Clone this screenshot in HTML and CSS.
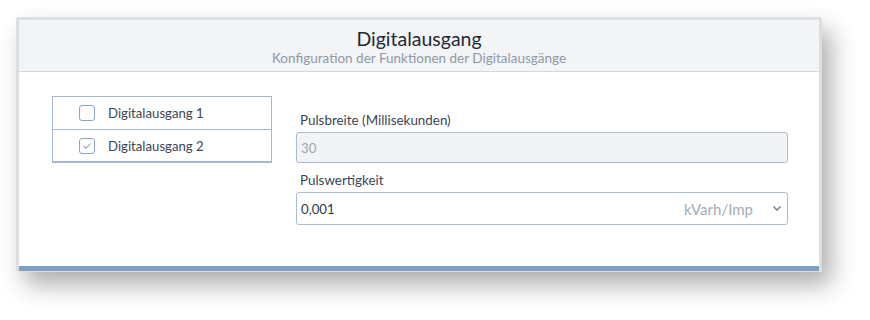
FILE: index.html
```html
<!DOCTYPE html>
<html lang="de">
<head>
<meta charset="utf-8">
<link rel="stylesheet" href="styles.css">
</head>
<body>
<div class="frame">
  <div class="panel">
    <div class="header">
      <div class="title">Digitalausgang</div>
      <div class="subtitle">Konfiguration der Funktionen der Digitalausgänge</div>
    </div>
    <div class="content">
      <ul class="outputs">
        <li class="row"><span class="check"></span><span class="label">Digitalausgang 1</span></li>
        <li class="row"><span class="check checked"><svg width="10" height="8" viewBox="0 0 10 8"><path d="M1.5 4.2 L4 6.5 L8.5 1.5" fill="none" stroke="#8ea6c4" stroke-width="1.1"/></svg></span><span class="label">Digitalausgang 2</span></li>
      </ul>
      <div class="fields">
        <div class="field-label">Pulsbreite (Millisekunden)</div>
        <div class="input disabled">30</div>
        <div class="field-label second">Pulswertigkeit</div>
        <div class="input select">
          <span class="value">0,001</span>
          <span class="unit">kVarh/Imp</span>
          <svg class="chev" width="10" height="7" viewBox="0 0 10 7"><path d="M1.5 1.5 L5 5 L8.5 1.5" fill="none" stroke="#7d8a99" stroke-width="1.6"/></svg>
        </div>
      </div>
    </div>
    <div class="bar"></div>
  </div>
</div>
</body>
</html>
```

FILE: styles.css
```css
html, body {
  margin: 0;
  padding: 0;
  background: #ffffff;
}
body {
  font-family: "Lato", "Roboto", sans-serif;
  padding: 17px 0 0 16px;
  min-height: 320px;
  box-sizing: border-box;
}
.frame {
  width: 800px;
  border: 3px solid #dcdfe2;
  border-bottom-width: 1px;
  border-radius: 2px;
  box-shadow: 9px 13px 24px rgba(0, 0, 0, 0.32);
}
.panel {
  background: #ffffff;
}
.header {
  background: #f3f4f6;
  border-bottom: 1px solid #d6d9dc;
  height: 51px;
  text-align: center;
  display: flex;
  flex-direction: column;
  align-items: center;
}
.title {
  font-size: 19.5px;
  color: #1f2a36;
  line-height: 22px;
  margin-top: 8px;
  font-weight: 400;
}
.subtitle {
  font-size: 13.5px;
  color: #8c9aa7;
  line-height: 17px;
  margin-top: 0px;
}
.content {
  display: flex;
  gap: 24px;
  padding: 24px 31px 0 33px;
  height: 170px;
}
.outputs {
  list-style: none;
  margin: 0;
  padding: 0;
  width: 218px;
  height: 64px;
  border: 1px solid #a3b8d1;
  border-bottom-width: 2px;
}
.row {
  display: flex;
  align-items: center;
  height: 32px;
  padding-left: 26px;
  box-sizing: border-box;
}
.row + .row {
  border-top: 1px solid #a3b8d1;
  height: 32px;
}
.check {
  width: 14px;
  height: 14px;
  border: 1px solid #8ea6c4;
  border-radius: 3px;
  display: flex;
  align-items: center;
  justify-content: center;
  margin-right: 13px;
}
.label {
  font-size: 13.2px;
  color: #3a4656;
}
.fields {
  flex: 1;
  display: flex;
  flex-direction: column;
  padding-top: 15px;
}
.field-label {
  font-size: 13.4px;
  color: #3a4656;
  line-height: 18px;
  padding-left: 4px;
  margin-bottom: 3px;
}
.field-label.second {
  margin-top: 8px;
}
.input {
  box-sizing: border-box;
  height: 31px;
  border: 1px solid #a9bcd4;
  border-radius: 3px;
  display: flex;
  align-items: center;
  padding-left: 4px;
  font-size: 13.2px;
  color: #2f3a47;
}
.input.disabled {
  background: #f2f3f5;
  color: #a0a6ad;
}
.input.select {
  height: 33px;
  padding-right: 5px;
}
.value {
  flex: 1;
}
.unit {
  color: #a6adb5;
  font-size: 15px;
  margin-right: 19px;
}
.chev {
  display: block;
}
.bar {
  height: 5px;
  background: #7f9fc6;
}
```
